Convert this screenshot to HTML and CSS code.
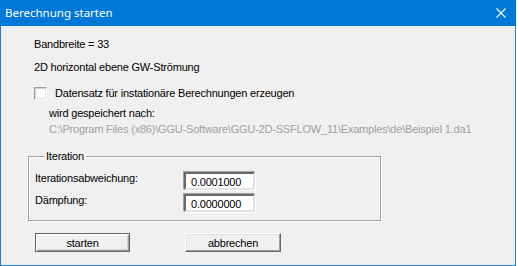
FILE: index.html
```html
<!DOCTYPE html>
<html lang="de">
    <head>
        <meta charset="UTF-8" />
        <title>Berechnung starten</title>
        <link rel="stylesheet" href="styles.css">
    </head>
    <body>
        <div class="window">
            <div class="titlebar">
                <span class="title">Berechnung starten</span>
                <svg class="close" width="10" height="10" viewBox="0 0 10 10">
                    <path d="M0.5 0.5 L9.5 9.5 M9.5 0.5 L0.5 9.5" stroke="#fff" stroke-width="1.1" fill="none" />
                </svg>
            </div>
            <div class="content">
                <div class="line">Bandbreite = 33</div>
                <div class="line second">2D horizontal ebene GW-Strömung</div>
                <div class="check_row">
                    <span class="checkbox"></span>
                    <span class="line">Datensatz für instationäre Berechnungen erzeugen</span>
                </div>
                <div class="line save_label">wird gespeichert nach:</div>
                <div class="line save_path">C:\Program Files (x86)\GGU-Software\GGU-2D-SSFLOW_11\Examples\de\Beispiel 1.da1</div>

                <div class="group">
                    <span class="group_title">Iteration</span>
                    <div class="field_row">
                        <span class="line field_label">Iterationsabweichung:</span>
                        <span class="field">0.0001000</span>
                    </div>
                    <div class="field_row">
                        <span class="line field_label">Dämpfung:</span>
                        <span class="field">0.0000000</span>
                    </div>
                </div>

                <div class="buttons">
                    <button class="btn default">starten</button>
                    <button class="btn">abbrechen</button>
                </div>
            </div>
        </div>
    </body>
</html>
```
FILE: styles.css
```css
body {
    margin: 0;
    background: #ffffff;
    font-family: "Liberation Sans", Arial, sans-serif;
    font-size: 11px;
    letter-spacing: -0.2px;
    color: black;
}

.window {
    width: 516px;
    height: 266px;
    box-sizing: border-box;
    background: #f0f0f0;
    border: 1px solid #1a7fd6;
    border-top: none;
}

.titlebar {
    height: 26px;
    margin: 0 -1px;
    background: #0078d7;
    display: flex;
    align-items: center;
    justify-content: space-between;
    padding: 0 10px 0 5px;
}

.title {
    font-family: "Segoe UI", "Noto Sans", sans-serif;
    font-size: 11.5px;
    letter-spacing: 0;
    color: #ffffff;
    padding-bottom: 1px;
}

.content {
    padding: 12px 0 0 33px;
}

.line {
    line-height: 13px;
    white-space: nowrap;
}

.second {
    margin-top: 10px;
}

.check_row {
    display: flex;
    align-items: flex-start;
    gap: 8px;
    margin-top: 13px;
}

.checkbox {
    width: 13px;
    height: 13px;
    box-sizing: border-box;
    background: #ffffff;
    border: 1px solid #a0a0a0;
    border-right-color: #ffffff;
    border-bottom-color: #ffffff;
    box-shadow: inset 1px 1px 0 #d0d0d0, inset -1px -1px 0 #e3e3e3;
}

.save_label {
    margin: 7px 0 0 15px;
}

.save_path {
    margin: 3px 0 0 15px;
    color: #a0a0a0;
}

.group {
    width: 353px;
    box-sizing: border-box;
    margin: 20px 0 0 -6px;
    padding: 0 0 8px 6px;
    border: 1px solid #a0a0a0;
    box-shadow: 1px 1px 0 #ffffff, inset 1px 1px 0 #ffffff;
}

.group_title {
    display: inline-block;
    line-height: 13px;
    margin: -7px 0 0 9px;
    padding: 0 2px;
    background: #f0f0f0;
    vertical-align: top;
}

.field_row {
    display: flex;
    align-items: flex-start;
    margin-top: 3px;
}

.field_row + .field_row {
    margin-top: 4px;
}

.field_label {
    width: 149px;
}

.field {
    width: 71px;
    height: 18px;
    box-sizing: border-box;
    padding: 2px 0 0 5px;
    line-height: 13px;
    background: #ffffff;
    border: 2px solid;
    border-color: #696969 #e3e3e3 #e3e3e3 #696969;
    box-shadow: -1px -1px 0 #a0a0a0, 1px 1px 0 #ffffff;
}

.buttons {
    display: flex;
    gap: 55px;
    margin: 12px 0 0 1px;
}

.btn {
    width: 95px;
    height: 19px;
    padding: 1px 0 0;
    font-family: "Liberation Sans", Arial, sans-serif;
    font-size: 11px;
    letter-spacing: -0.2px;
    color: black;
    background: #f0f0f0;
    border: 1px solid;
    border-color: #ffffff #696969 #696969 #ffffff;
    box-shadow: inset -1px -1px 0 #a0a0a0, inset 1px 1px 0 #e3e3e3;
}

.btn + .btn {
    width: 96px;
}

.default {
    border-color: #646464;
    box-shadow: inset 1px 1px 0 #ffffff, inset -1px -1px 0 #a0a0a0, inset -2px -2px 0 #d0d0d0;
}
```
